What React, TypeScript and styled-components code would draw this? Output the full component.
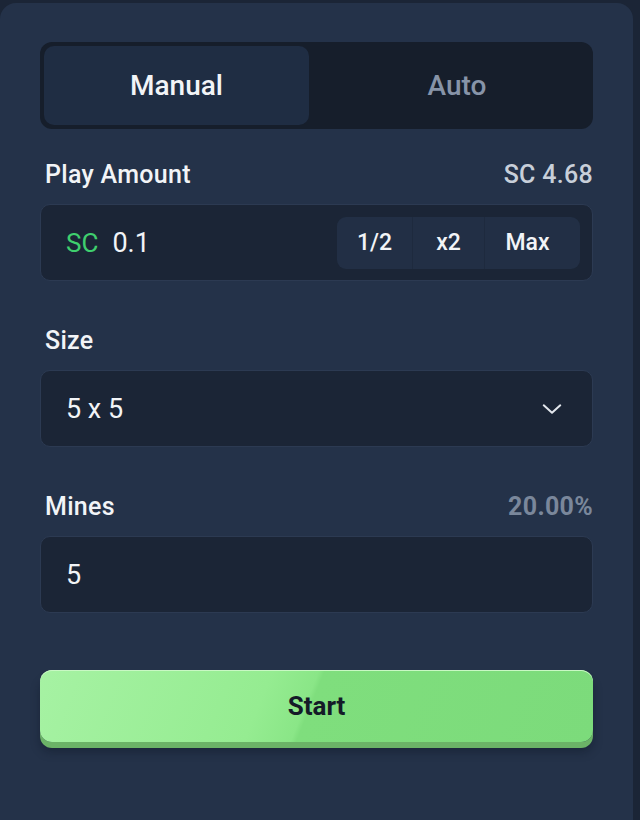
import React from "react";
import styled, { createGlobalStyle } from "styled-components";

const Global = createGlobalStyle`
  html, body { margin: 0; padding: 0; background: #1b2536; }
  body { font-family: Roboto, "Liberation Sans", sans-serif; -webkit-font-smoothing: antialiased; }
  * { box-sizing: border-box; }
`;

const Page = styled.div`
  width: 640px;
  height: 820px;
  padding-top: 3px;
  overflow: hidden;
`;

const Panel = styled.div`
  width: 633px;
  height: 817px;
  background: #243249;
  border-radius: 16px 16px 0 0;
  padding: 39px 40px 0 40px;
  display: flex;
  flex-direction: column;
`;

const Tabs = styled.div`
  height: 87px;
  background: #161e2b;
  border-radius: 12px;
  padding: 4px;
  display: grid;
  grid-template-columns: 265px 1fr;
`;

const Tab = styled.button<{ $active?: boolean }>`
  border: none;
  border-radius: 10px;
  background: ${(p) => (p.$active ? "#1f2d43" : "transparent")};
  color: ${(p) => (p.$active ? "#f2f4f7" : "#8794a8")};
  font-family: inherit;
  font-size: 28px;
  font-weight: 500;
  cursor: pointer;
  padding: 0 0 0 ${(p) => (p.$active ? 0 : 16)}px;
`;

const LabelRow = styled.div<{ $top: number }>`
  display: flex;
  justify-content: space-between;
  align-items: center;
  height: 28px;
  margin-top: ${(p) => p.$top}px;
  margin-bottom: 16px;
  padding: 0 0 0 5px;
`;

const Label = styled.span`
  color: #f2f4f7;
  font-size: 25px;
  font-weight: 500;
  letter-spacing: 0.3px;
`;

const Aside = styled.span<{ $muted?: boolean }>`
  color: ${(p) => (p.$muted ? "#7a879b" : "#c8cfd9")};
  font-size: 25px;
  font-weight: ${(p) => (p.$muted ? 700 : 500)};
  letter-spacing: 0.3px;
`;

const Field = styled.div`
  height: 77px;
  background: #1b2536;
  border: 1px solid #2c3a52;
  border-radius: 10px;
  display: flex;
  align-items: center;
  padding: 0 12px 0 25px;
`;

const Currency = styled.span`
  color: #3fcf6e;
  font-size: 26px;
  font-weight: 400;
  margin-right: 14px;
`;

const Value = styled.span`
  color: #f2f4f7;
  font-size: 27px;
  font-weight: 400;
  flex: 1;
`;

const Group = styled.div`
  display: flex;
  height: 52px;
  background: #222f45;
  border-radius: 9px;
  overflow: hidden;
`;

const GroupBtn = styled.button<{ $w: number; $last?: boolean }>`
  width: ${(p) => p.$w}px;
  border: none;
  border-right: ${(p) => (p.$last ? "none" : "1px solid #1e2a3e")};
  background: transparent;
  color: #f2f4f7;
  font-family: inherit;
  font-size: 23px;
  font-weight: 500;
  padding: 0 ${(p) => (p.$last ? 10 : 0)}px 0 0;
  cursor: pointer;
`;

const Chevron = styled.svg`
  width: 22px;
  height: 22px;
  margin-right: 17px;
`;

const StartWrap = styled.div`
  margin-top: 57px;
`;

const StartButton = styled.button`
  width: 100%;
  height: 72px;
  border: none;
  border-radius: 12px;
  background: linear-gradient(
    112deg,
    #a6f2a3 0%,
    #95ec91 40%,
    #8ae687 48%,
    #7fde7d 49%,
    #7cdb7b 100%
  );
  box-shadow: inset 0 1px 0 #c9f8c4, 0 6px 0 #6bb367, 0 10px 10px rgba(10, 16, 28, 0.35);
  color: #141b28;
  font-family: inherit;
  font-size: 26px;
  font-weight: 700;
  cursor: pointer;
`;

export default function App() {
  return (
    <>
      <Global />
      <Page>
        <Panel>
          <Tabs>
            <Tab $active>Manual</Tab>
            <Tab>Auto</Tab>
          </Tabs>

          <LabelRow $top={31}>
            <Label>Play Amount</Label>
            <Aside>SC 4.68</Aside>
          </LabelRow>
          <Field>
            <Currency>SC</Currency>
            <Value>0.1</Value>
            <Group>
              <GroupBtn $w={76}>1/2</GroupBtn>
              <GroupBtn $w={72}>x2</GroupBtn>
              <GroupBtn $w={95} $last>
                Max
              </GroupBtn>
            </Group>
          </Field>

          <LabelRow $top={45}>
            <Label>Size</Label>
          </LabelRow>
          <Field>
            <Value>5 x 5</Value>
            <Chevron viewBox="0 0 24 24" fill="none" stroke="#e3e7ed" strokeWidth={2.2} strokeLinecap="round" strokeLinejoin="round">
              <path d="M3 8 L12 16 L21 8" />
            </Chevron>
          </Field>

          <LabelRow $top={45}>
            <Label>Mines</Label>
            <Aside $muted>20.00%</Aside>
          </LabelRow>
          <Field>
            <Value>5</Value>
          </Field>

          <StartWrap>
            <StartButton>Start</StartButton>
          </StartWrap>
        </Panel>
      </Page>
    </>
  );
}
